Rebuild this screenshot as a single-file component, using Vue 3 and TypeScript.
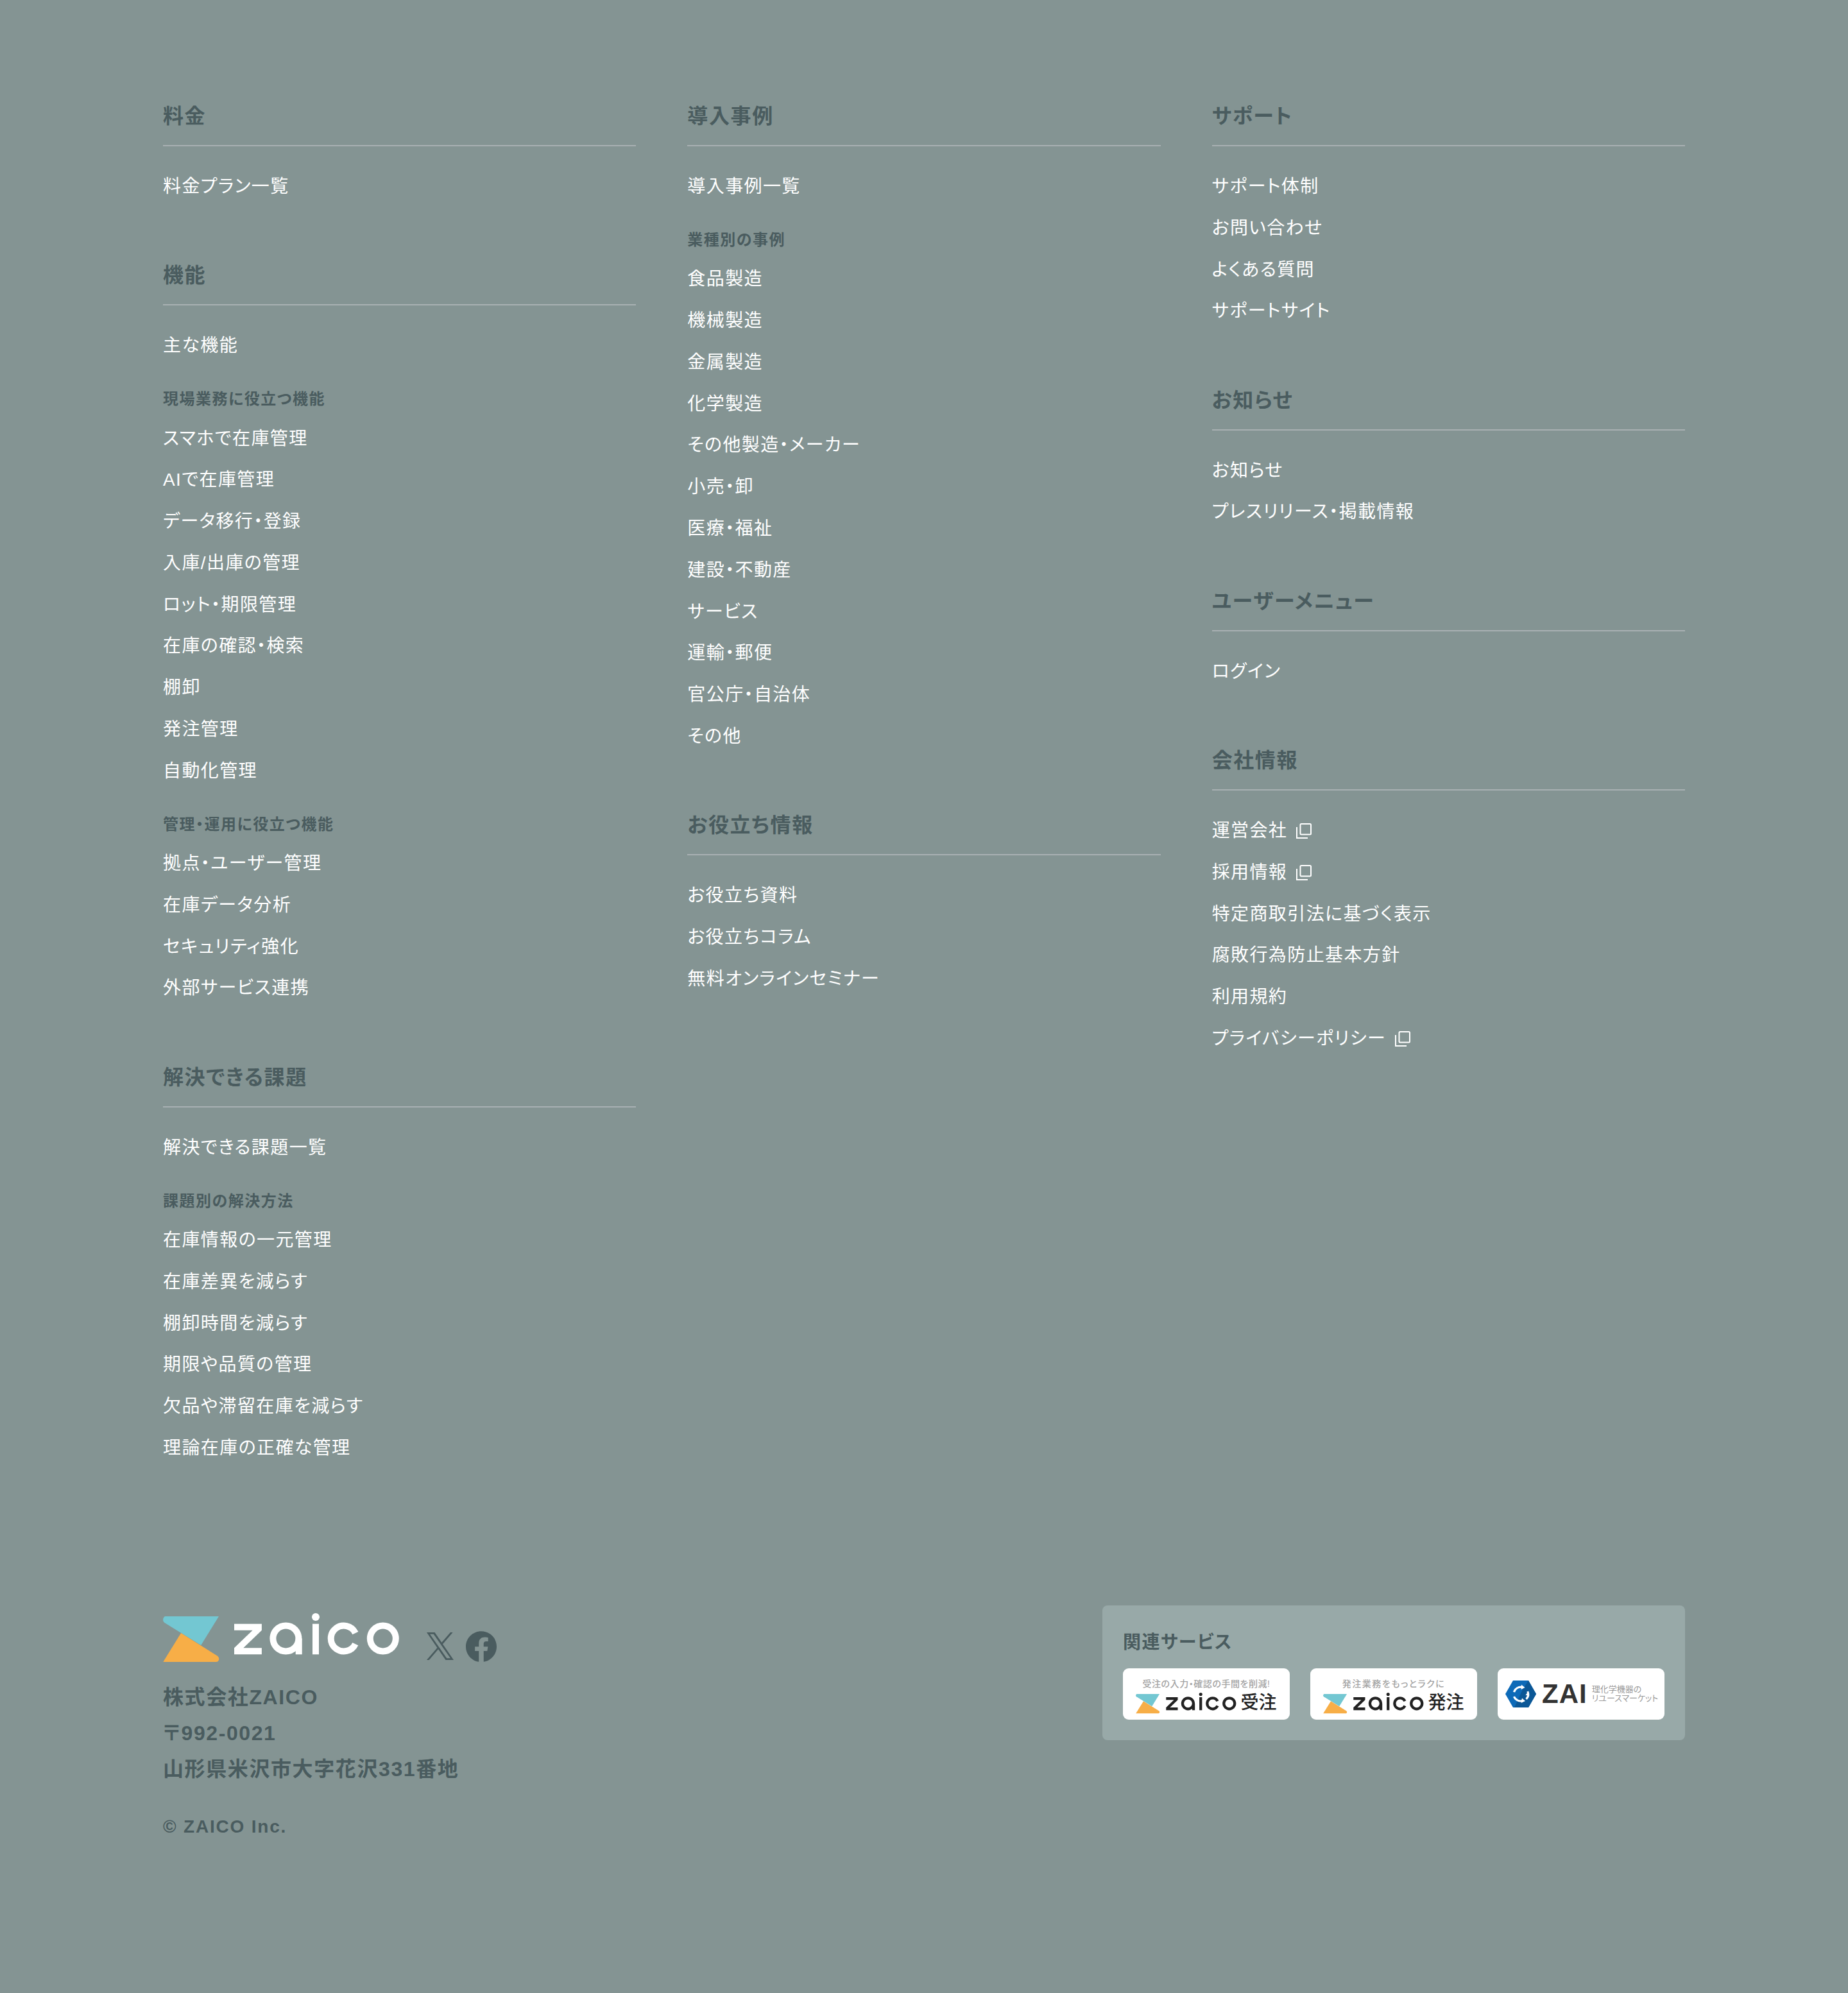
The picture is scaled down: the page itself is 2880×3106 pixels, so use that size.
<script setup lang="ts">
interface Group { label?: string; items: { text: string; ext?: boolean }[] }
interface Section { title: string; groups: Group[] }

const t = (...a: string[]) => a.map((text) => ({ text }))

const columns: Section[][] = [
  [
    { title: '料金', groups: [{ items: t('料金プラン一覧') }] },
    {
      title: '機能',
      groups: [
        { items: t('主な機能') },
        { label: '現場業務に役立つ機能', items: t('スマホで在庫管理', 'AIで在庫管理', 'データ移行・登録', '入庫/出庫の管理', 'ロット・期限管理', '在庫の確認・検索', '棚卸', '発注管理', '自動化管理') },
        { label: '管理・運用に役立つ機能', items: t('拠点・ユーザー管理', '在庫データ分析', 'セキュリティ強化', '外部サービス連携') },
      ],
    },
    {
      title: '解決できる課題',
      groups: [
        { items: t('解決できる課題一覧') },
        { label: '課題別の解決方法', items: t('在庫情報の一元管理', '在庫差異を減らす', '棚卸時間を減らす', '期限や品質の管理', '欠品や滞留在庫を減らす', '理論在庫の正確な管理') },
      ],
    },
  ],
  [
    {
      title: '導入事例',
      groups: [
        { items: t('導入事例一覧') },
        { label: '業種別の事例', items: t('食品製造', '機械製造', '金属製造', '化学製造', 'その他製造・メーカー', '小売・卸', '医療・福祉', '建設・不動産', 'サービス', '運輸・郵便', '官公庁・自治体', 'その他') },
      ],
    },
    { title: 'お役立ち情報', groups: [{ items: t('お役立ち資料', 'お役立ちコラム', '無料オンラインセミナー') }] },
  ],
  [
    { title: 'サポート', groups: [{ items: t('サポート体制', 'お問い合わせ', 'よくある質問', 'サポートサイト') }] },
    { title: 'お知らせ', groups: [{ items: t('お知らせ', 'プレスリリース・掲載情報') }] },
    { title: 'ユーザーメニュー', groups: [{ items: t('ログイン') }] },
    {
      title: '会社情報',
      groups: [
        {
          items: [
            { text: '運営会社', ext: true },
            { text: '採用情報', ext: true },
            { text: '特定商取引法に基づく表示' },
            { text: '腐敗行為防止基本方針' },
            { text: '利用規約' },
            { text: 'プライバシーポリシー', ext: true },
          ],
        },
      ],
    },
  ],
]

const zaicoBadges = [
  { tag: '受注の入力・確認の手間を削減!', name: '受注', wide: false },
  { tag: '発注業務をもっとラクに', name: '発注', wide: true },
]
</script>

<template>
  <div class="page">
    <div class="grid">
      <div v-for="(col, ci) in columns" :key="ci" class="col">
        <section v-for="s in col" :key="s.title" class="section">
          <h3 class="title">{{ s.title }}</h3>
          <div class="body">
            <div v-for="(g, gi) in s.groups" :key="gi" class="group">
              <h4 v-if="g.label" class="label">{{ g.label }}</h4>
              <a v-for="it in g.items" :key="it.text" class="item">
                <span>{{ it.text }}</span>
                <svg v-if="it.ext" class="ext" width="24" height="24" viewBox="0 0 24 24" fill="none" stroke="#fff" stroke-width="2">
                  <rect x="6.5" y="1" width="16.5" height="16.5" rx="1.5" />
                  <path d="M1 6v17h17" />
                </svg>
              </a>
            </div>
          </div>
        </section>
      </div>
    </div>

    <footer class="footer">
      <div class="company">
        <div class="brand">
          <svg class="logo" width="369" height="76" viewBox="0 0 369 76" role="img" aria-label="zaico">
            <path d="M4 5H87L59.2 50 2.5 15C-1.5 12.5 0 5 4 5Z" fill="#73c7d2" />
            <path d="M28.1 31 84.5 66.5C89 69.5 87.5 76 83 76H.3Z" fill="#f7ae47" />
            <path d="M111 16.7H153.9V26.7L125.3 54.3H153.9V64.3H111V54.3L139.6 26.7H111Z" fill="#fff" />
            <g fill="none" stroke="#fff" stroke-width="10">
              <circle cx="191.4" cy="39.5" r="20" />
              <path d="M211.7 39.5V64.3" />
              <path d="M238 16.7V64.3" />
              <path d="M299.8 31A20 20 0 1 0 299.8 48" />
              <circle cx="342.8" cy="39.5" r="20" />
            </g>
            <circle cx="238" cy="6" r="6" fill="#fff" />
          </svg>
          <svg class="x" width="42" height="43" viewBox="0 0 1200 1227" preserveAspectRatio="none" aria-label="X">
            <path fill="#4a5c5f" d="M714.163 519.284L1160.89 0H1055.03L667.137 450.887L357.328 0H0L468.492 681.821L0 1226.37H105.866L515.491 750.218L842.672 1226.37H1200L714.137 519.284H714.163ZM569.165 687.828L521.697 619.934L144.011 79.6944H306.615L611.412 515.685L658.88 583.579L1055.08 1150.3H892.476L569.165 687.854V687.828Z" />
          </svg>
          <svg class="fb" width="48" height="48" viewBox="0 0 24 24" aria-label="Facebook">
            <path fill="#4a5c5f" d="M24 12.073c0-6.627-5.373-12-12-12s-12 5.373-12 12c0 5.99 4.388 10.954 10.125 11.854v-8.385H7.078v-3.47h3.047V9.43c0-3.007 1.792-4.669 4.533-4.669 1.312 0 2.686.235 2.686.235v2.953H15.83c-1.491 0-1.956.925-1.956 1.874v2.25h3.328l-.532 3.47h-2.796v8.385C19.612 23.027 24 18.062 24 12.073z" />
          </svg>
        </div>
        <p class="addr">株式会社ZAICO</p>
        <p class="addr">〒992-0021</p>
        <p class="addr">山形県米沢市大字花沢331番地</p>
        <p class="copy">© ZAICO Inc.</p>
      </div>

      <aside class="related">
        <h4 class="related-title">関連サービス</h4>
        <div class="badges">
          <a v-for="b in zaicoBadges" :key="b.name" class="badge">
            <span class="tag" :class="{ wide: b.wide }">{{ b.tag }}</span>
            <span class="badge-row">
              <svg class="mini" viewBox="0 0 369 76" role="img" aria-label="zaico">
                <path d="M4 5H87L59.2 50 2.5 15C-1.5 12.5 0 5 4 5Z" fill="#73c7d2" />
                <path d="M28.1 31 84.5 66.5C89 69.5 87.5 76 83 76H.3Z" fill="#f7ae47" />
                <path d="M111 16.7H153.9V26.7L125.3 54.3H153.9V64.3H111V54.3L139.6 26.7H111Z" fill="#222" />
                <g fill="none" stroke="#222" stroke-width="10">
                  <circle cx="191.4" cy="39.5" r="20" />
                  <path d="M211.7 39.5V64.3" />
                  <path d="M238 16.7V64.3" />
                  <path d="M299.8 31A20 20 0 1 0 299.8 48" />
                  <circle cx="342.8" cy="39.5" r="20" />
                </g>
                <circle cx="238" cy="6" r="6" fill="#222" />
              </svg>
              <span class="badge-name">{{ b.name }}</span>
            </span>
          </a>
          <a class="badge zai">
            <svg width="48" height="42" viewBox="0 0 48 42" aria-hidden="true">
              <path d="M12 0H36L48 21 36 42H12L0 21Z" fill="#0d6ab8" />
              <path d="M36 0 48 21 36 42H14L27 14Z" fill="#0b5796" />
              <g fill="none" stroke="#fff" stroke-width="3.2">
                <path d="M13.5 18A11 11 0 0 1 26 10.3" />
                <path d="M34.8 17A11 11 0 0 1 32.5 29" />
                <path d="M27 31.5A11 11 0 0 1 13.5 25" />
              </g>
              <g fill="#fff">
                <path d="M25 6.5 30.5 11 24.5 14Z" />
                <path d="M37.5 18 31.5 18 34 23Z" transform="rotate(180 34.5 20.5)" />
                <path d="M26 27.5 31 32 24.5 35Z" />
              </g>
            </svg>
            <span class="zai-name">ZAI</span>
            <span class="zai-desc"><span>理化学機器の</span><span>リユースマーケット</span></span>
          </a>
        </div>
      </aside>
    </footer>
  </div>
</template>

<style scoped>
.page {
  box-sizing: border-box;
  min-height: 3106px;
  padding: 156px 254px 0;
  background: #849493;
  font-family: "Liberation Sans", "Noto Sans CJK JP", sans-serif;
  font-feature-settings: "palt";
  color: #fff;
}
.grid {
  display: grid;
  grid-template-columns: repeat(3, 1fr);
  column-gap: 80px;
}
.section {
  margin-bottom: 90.5px;
}
.title {
  margin: 0;
  padding-bottom: 19px;
  border-bottom: 2px solid #a8b0b2;
  font-size: 32px;
  line-height: 51px;
  font-weight: 700;
  letter-spacing: 1.6px;
  color: #4a5c5f;
}
.body {
  padding-top: 41px;
}
.label {
  margin: 41px 0 20px;
  font-size: 24px;
  line-height: 38.4px;
  font-weight: 700;
  letter-spacing: 1.5px;
  color: #4a5c5f;
}
.item {
  display: flex;
  align-items: center;
  gap: 14px;
  margin-bottom: 20px;
  font-size: 28px;
  line-height: 44.8px;
  letter-spacing: 1.4px;
}
.ext {
  flex: none;
}
.footer {
  display: flex;
  justify-content: space-between;
  align-items: flex-start;
  margin-top: 132px;
}
.company {
  padding-top: 12px;
}
.brand {
  display: flex;
  align-items: flex-end;
}
.x {
  margin: 0 0 3px 42px;
}
.fb {
  margin-left: 19px;
}
.addr {
  margin: 0;
  font-size: 32px;
  line-height: 56px;
  font-weight: 700;
  letter-spacing: 1.6px;
  color: #4a5c5f;
}
.brand + .addr {
  margin-top: 27px;
}
.copy {
  margin: 40px 0 0;
  font-size: 28px;
  line-height: 44.8px;
  font-weight: 700;
  letter-spacing: 1.8px;
  color: #4a5c5f;
}
.related {
  box-sizing: border-box;
  width: 908px;
  height: 210px;
  padding: 36px 32px 0;
  border-radius: 8px;
  background: #98a9a8;
}
.related-title {
  margin: 0;
  font-size: 28px;
  line-height: 44px;
  font-weight: 700;
  letter-spacing: 1.5px;
  color: #4a5c5f;
}
.badges {
  display: flex;
  justify-content: space-between;
  margin-top: 18px;
}
.badge {
  box-sizing: border-box;
  display: flex;
  flex-direction: column;
  align-items: center;
  width: 260px;
  height: 80px;
  padding-top: 14px;
  border-radius: 9px;
  background: #fff;
  overflow: hidden;
}
.tag {
  font-size: 14px;
  line-height: 20px;
  font-weight: 500;
  letter-spacing: 0.55px;
  color: #a3a3a3;
}
.tag.wide {
  letter-spacing: 1.5px;
}
.badge-row {
  display: flex;
  align-items: center;
  gap: 6px;
  margin-top: 4px;
}
.mini {
  width: 157px;
  height: 32.3px;
}
.badge-name {
  font-size: 28px;
  line-height: 32px;
  font-weight: 500;
  color: #222;
}
.zai {
  flex-direction: row;
  padding: 0 0 0 12px;
}
.zai-name {
  margin-left: 9px;
  font-size: 42px;
  line-height: 42px;
  font-weight: 700;
  letter-spacing: 1px;
  color: #333;
}
.zai-desc {
  display: flex;
  flex-direction: column;
  margin-left: 7px;
  font-size: 13px;
  line-height: 14px;
  color: #999;
}
</style>

<style>
body {
  margin: 0;
  background: #849493;
}
</style>
